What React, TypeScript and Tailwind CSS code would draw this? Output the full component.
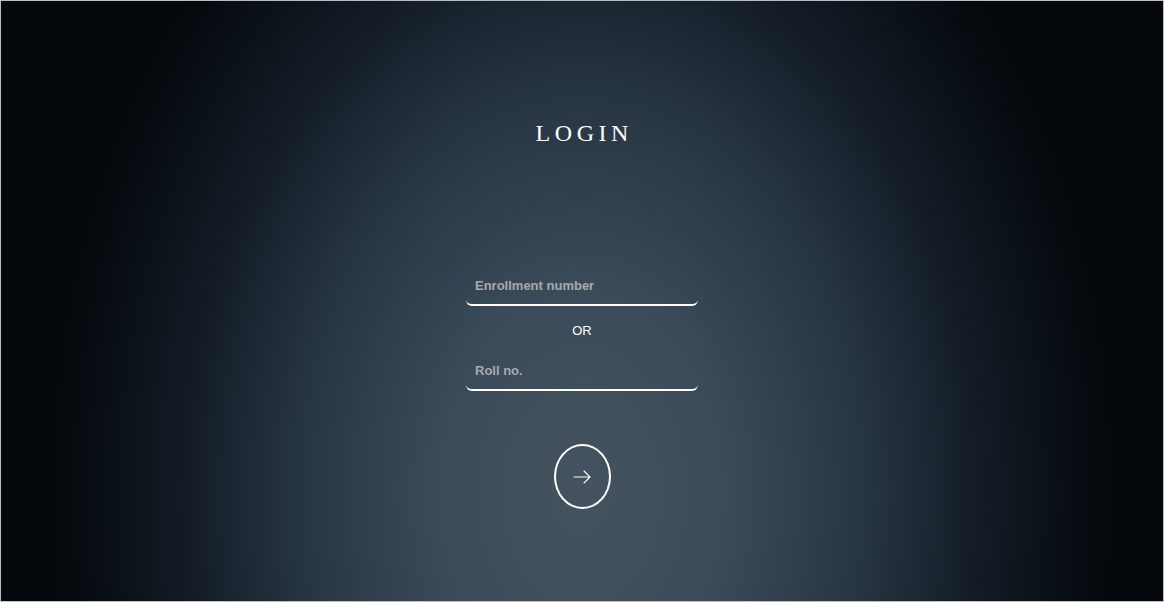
import { useState } from 'react'

export default function App() {
  const [enroll, setEnroll] = useState('')
  const [roll, setRoll]     = useState('')

  return (
    <div className="h-[602px] w-full border border-[#b9bdc2] bg-[radial-gradient(ellipse_46%_125%_at_50%_82%,#44535f_0%,#3b4a58_28%,#2a3846_50%,#121b25_75%,#04070b_100%)] flex flex-col items-center font-['Liberation_Sans',Arial,sans-serif]">
      <h1 className="mt-[116px] text-[24px] leading-[32px] tracking-[0.19em] pl-[0.19em] text-white font-['Liberation_Serif','Times_New_Roman',serif]">
        LOGIN
      </h1>

      <form className="mt-[116px] w-[232px] flex flex-col items-center" onSubmit={e => e.preventDefault()}>
        <input
          value={enroll}
          onChange={e => setEnroll(e.target.value)}
          placeholder="Enrollment number"
          className="w-full h-[41px] px-[9px] pt-[1px] bg-transparent border-b-2 border-white rounded-md text-[13px] font-bold text-white placeholder:text-[#a7aaad] outline-none"
        />
        <div className="mt-[17px] text-[13px] leading-[16px] text-white">OR</div>
        <input
          value={roll}
          onChange={e => setRoll(e.target.value)}
          placeholder="Roll no."
          className="mt-[11px] w-full h-[41px] px-[9px] pt-[1px] bg-transparent border-b-2 border-white rounded-md text-[13px] font-bold text-white placeholder:text-[#a7aaad] outline-none"
        />
        <button
          type="submit"
          aria-label="Login"
          className="mt-[53px] w-[57px] h-[65px] rounded-[50%] border-2 border-white flex items-center justify-center text-white"
        >
          <svg className="w-[20px] h-[20px]" fill="none" stroke="currentColor" strokeWidth={1.1} viewBox="0 0 20 20">
            <path strokeLinecap="round" strokeLinejoin="round" d="M2 10h16M12 4l6 6-6 6" />
          </svg>
        </button>
      </form>
    </div>
  )
}
